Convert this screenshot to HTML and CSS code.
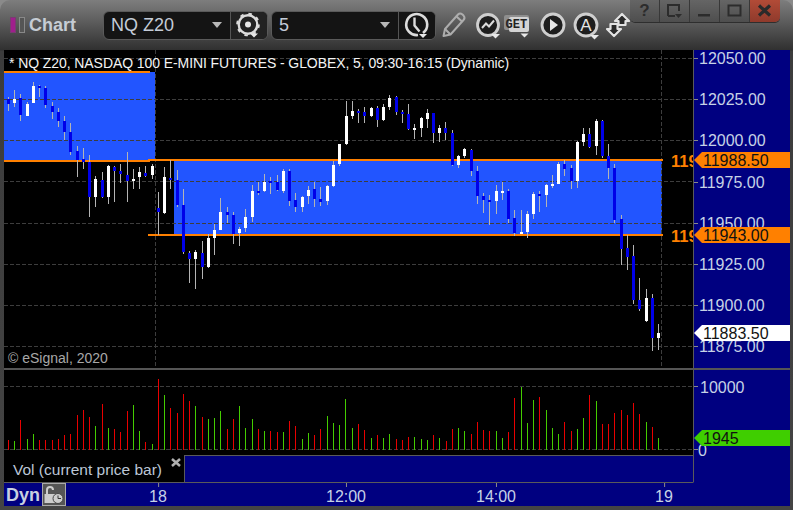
FILE: index.html
```html
<!DOCTYPE html>
<html lang="en">
<head>
<meta charset="utf-8">
<title>Chart</title>
<link rel="stylesheet" href="styles.css">
</head>
<body>
<div class="window">
  <header class="toolbar">
    <span class="pip pip-on"></span>
    <span class="pip pip-off"></span>
    <span class="title">Chart</span>

    <div class="combo combo-symbol">
      <span class="combo-text">NQ Z20</span>
      <span class="caret"></span>
      <span class="combo-btn">
        <svg class="icon" viewBox="1 0 28 28" width="28" height="28">
          <circle class="ring" stroke-width="2.400" cx="14" cy="13.500" r="9.300"/>
          <circle class="ring-teeth" cx="14" cy="13.500" r="10.800" stroke-width="2" stroke-dasharray="3.500 5"/>
          <circle class="solid" cx="14" cy="13.500" r="3"/>
          <path class="solid" d="M16 22.500h8l-4 4z"/>
        </svg>
      </span>
    </div>

    <div class="combo combo-period">
      <span class="combo-text">5</span>
      <span class="caret"></span>
      <span class="combo-btn">
        <svg class="icon" viewBox="1 0 28 28" width="28" height="28">
          <path class="ring" stroke-width="2.600" d="M21 22a10.500 10.500 0 1 0-5 2"/>
          <path class="ring" stroke-width="2.400" d="M12.500 6.500v8l5 6"/>
          <path class="solid" d="M17 23h8l-4 4z"/>
        </svg>
      </span>
    </div>

    <svg class="tool tool-pencil" viewBox="0 0 26 28" width="26" height="28">
      <path class="pencil" d="M2.500 25l1.500-7L17 3.500q2-2 4.500 0l1 1q2 2.500 0 4.500L9.500 23.500z"/>
      <path class="pencil" d="M15.500 5.500l5.500 5M4 18l5.500 5.500"/>
    </svg>
    <svg class="tool tool-trend" viewBox="0 0 28 28" width="28" height="28">
      <circle class="disc" cx="13" cy="13" r="10.500"/>
      <path class="ring" stroke-width="2" d="M7 16l4-4.500 3 3 5-6"/>
      <path class="solid" d="M16 22h9l-4.500 4.500z"/>
    </svg>
    <svg class="tool tool-get" viewBox="0 0 30 28" width="30" height="28">
      <rect class="get-back" x="0" y="3" width="25" height="15" rx="2"/>
      <rect class="get-front" x="5" y="5" width="20" height="15" rx="2"/>
      <text class="get-text" x="1.500" y="16">GET</text>
      <path class="solid" d="M16.500 21.500h8l-4 4z"/>
    </svg>
    <svg class="tool tool-play" viewBox="0 0 26 28" width="26" height="28">
      <circle class="disc" cx="13" cy="13" r="11"/>
      <path class="solid" d="M10 7l8 6-8 6z"/>
    </svg>
    <svg class="tool tool-auto" viewBox="0 0 30 28" width="30" height="28">
      <circle class="disc" cx="13" cy="13" r="11"/>
      <text class="auto-text" x="13" y="19">A</text>
      <path class="solid" d="M17 23h9l-4.500 4.500z"/>
    </svg>
    <svg class="tool tool-swap" viewBox="0 0 24 28" width="24" height="28">
      <path class="swap" d="M16 2l7 7h-3.500v4h-7V9H9z"/>
      <path class="swap" d="M8 24l-7-7h3.500v-5h7v5H15z"/>
    </svg>

    <div class="win-btns">
      <span class="win-btn">?</span>
      <span class="win-btn">
        <svg viewBox="0 0 18 16" width="18" height="16"><path class="win-icon" d="M2 13V2h11v6M2 13h7"/><path class="win-fill" d="M9 11h7l-3.500 4z"/></svg>
      </span>
      <span class="win-btn">
        <svg viewBox="0 0 18 16" width="18" height="16"><path class="win-fill" d="M2 11h12v2.500H2z"/></svg>
      </span>
      <span class="win-btn">
        <svg viewBox="0 0 18 16" width="18" height="16"><path class="win-icon" d="M2.500 2.500h12v10h-12z"/></svg>
      </span>
      <span class="win-btn win-close">
        <svg viewBox="0 0 18 16" width="18" height="16"><path class="win-x" d="M3 2.500l11 10M14 2.500l-11 10"/></svg>
      </span>
    </div>
  </header>

  <main class="chart">
    <section class="price-pane">
      <svg class="plot" viewBox="4 50 689 318" width="689" height="318">
        <rect class="band" x="4" y="72" width="151" height="89"/>
        <rect class="band" x="174" y="160" width="488" height="75"/>
        <path class="grid" d="M4 58.500H693M4 99.500H693M4 140.500H693M4 181.500H693M4 223.500H693M4 264.500H693M4 305.500H693M4 346.500H693M155.500 50V368M661.500 50V368"/>
        <path class="level" d="M4 72H150M4 161H150M148 160H663M148 235H663"/>

        <g transform="translate(0 70) scale(.33333)">
          <path class="wick" d="M25 82V122M43 60V110M61 72V152M82 96V138M100 37V99M118 45V81M136 48V114M157 96V147M175 114V171M193 138V210M211 159V255M232 228V321M250 234V297M268 255V441M286 318V411M307 306V384M325 285V402M343 288V396M361 282V339M382 246V396M400 297V357M418 291V357M436 288V321M457 282V327M475 366V495M493 291V432M511 270V357M532 300V411M550 357V552M568 543V639M586 540V657M607 513V627M625 492V594M643 462V555M661 384V480M682 411V459M700 426V522M718 471V528"/>
          <path class="body-blue" d="M25 87V102M61 84V134M118 48V53M136 54V105M157 108V126M175 126V153M193 153V186M211 186V246M232 243V270M250 267V276M268 276V381M307 330V381M343 291V303M361 303V312M382 315V333M436 309V318M475 414V426M511 324V330M532 330V405M550 405V546M568 549V567M607 549V591M682 426V435M700 435V492"/>
          <path class="body-white" d="M43 87V99M82 102V138M100 48V99M286 327V381M325 288V381M400 327V333M418 306V321M457 288V315M493 321V429M586 546V567M625 504V591M643 480V504M661 426V480M718 477V489"/>
        </g>

        <g transform="translate(230 85) scale(.33333)">
          <path class="wick" d="M46 372V441M67 300V411M85 291V330M103 267V321M121 276V327M142 270V318M160 252V324M178 252V363M196 324V381M217 333V381M235 303V357M253 291V366M271 306V363M292 300V360M310 228V306M328 177V243M349 48V180M367 48V102M385 72V114M403 66V114M424 66V96M442 63V126M460 57V108M478 30V75M499 33V90M517 75V114M535 57V135M553 117V162M574 96V156M592 72V129M610 84V174M628 120V171M646 111V165M667 135V243M685 210V249M703 189V219"/>
          <path class="body-blue" d="M85 318V324M121 288V294M142 291V315M178 258V348M196 345V366M253 312V342M271 342V351M385 78V84M403 81V93M442 69V105M499 36V81M517 81V87M535 87V132M610 84V144M646 129V144M667 144V240"/>
          <path class="body-white" d="M46 396V429M67 318V396M103 291V318M160 258V318M217 336V366M235 315V333M292 303V348M310 240V303M328 177V237M349 93V177M367 78V93M424 69V93M460 66V105M478 39V66M553 129V135M574 99V129M592 84V102M628 129V144M685 213V240M703 192V213"/>
        </g>

        <g transform="translate(460 100) scale(.33333)">
          <path class="wick" d="M34 147V228M52 198V312M70 279V339M88 285V375M109 255V342M127 246V300M145 267V369M163 330V408M184 330V402M202 333V414M220 276V357M238 273V336M259 252V321M277 225V264M295 186V252M313 180V228M334 195V267M352 123V264M370 84V138M388 84V144M409 57V165M427 60V174M445 132V237M463 192V369M484 345V495M502 405V510M520 435V612M538 534V633M559 567V666M577 582V753M595 672V750"/>
          <path class="body-blue" d="M34 150V213M52 213V288M70 288V300M88 300V306M145 273V357M163 354V399M238 282V288M313 192V207M334 204V243M388 102V141M427 63V168M445 168V204M463 204V360M484 357V447M502 444V471M520 468V600M538 600V627M577 594V714"/>
          <path class="body-white" d="M109 273V303M127 273V279M184 396V402M202 342V396M220 282V342M259 255V285M277 252V258M295 192V252M352 126V243M370 102V126M409 63V138M559 594V663M595 699V714"/>
        </g>
      </svg>
      <p class="study-title">* NQ Z20, NASDAQ 100 E-MINI FUTURES - GLOBEX, 5, 09:30-16:15 (Dynamic)</p>
      <p class="copyright">© eSignal, 2020</p>
      <span class="level-text level-hi">119</span>
      <span class="level-text level-lo">119</span>
    </section>

    <section class="axis price-axis">
      <div class="axis-row">12050.00</div>
      <div class="axis-row">12025.00</div>
      <div class="axis-row">12000.00</div>
      <div class="axis-row">11975.00</div>
      <div class="axis-row">11950.00</div>
      <div class="axis-row">11925.00</div>
      <div class="axis-row">11900.00</div>
      <div class="axis-row">11875.00</div>
    </section>

    <section class="vol-pane">
      <svg class="plot" viewBox="4 370 689 85" width="689" height="85">
        <path class="grid" d="M4 386.500H693M4 449.500H693"/>
        <g transform="translate(0 365) scale(.33333)">
          <path class="vol-red" d="M25 225V255M61 165V255M118 225V255M136 225V255M157 225V255M175 222V255M193 210V255M211 207V255M232 150V255M250 135V255M268 156V255M307 117V255M343 192V255M361 201V255M382 138V255M436 231V255M475 42V255M511 129V255M532 144V255M550 87V255M568 108V255M607 156V255M682 192V255M700 162V255M775 192V255M811 198V255M832 201V255M868 168V255M886 183V255M943 210V255M961 192V255"/>
          <path class="vol-green" d="M43 228V255M82 222V255M100 207V255M286 183V255M325 189V255M400 120V255M418 198V255M457 237V255M493 90V255M586 123V255M625 162V255M643 159V255M661 138V255M718 123V255M736 189V255M757 162V255M793 198V255M850 201V255M907 222V255M925 204V255M982 153V255M1000 174V255M1018 180V255M1038 102V255"/>
        </g>
        <g transform="translate(350 365) scale(.33333)">
          <path class="vol-red" d="M25 177V255M43 195V255M82 210V255M139 222V255M157 225V255M175 216V255M250 210V255M289 228V255M307 192V255M364 207V255M382 171V255M400 195V255M418 198V255M475 201V255M493 99V255M568 96V255M643 171V255M664 198V255M718 90V255M757 177V255M775 177V255M793 144V255M814 135V255M832 150V255M850 114V255M868 147V255M907 186V255"/>
          <path class="vol-green" d="M7 189V255M64 219V255M100 219V255M118 207V255M193 216V255M214 222V255M232 225V255M268 219V255M325 189V255M343 198V255M439 198V255M457 219V255M514 66V255M532 174V255M550 105V255M589 135V255M607 189V255M625 207V255M682 192V255M700 159V255M739 108V255M889 171V255M925 219V255"/>
        </g>
      </svg>
      <div class="legend-row">
        <div class="legend">
          <span class="legend-text">Vol (current price bar)</span>
          <svg class="legend-close" viewBox="0 0 10 9" width="10" height="9"><path d="M1 1l8 7M9 1L1 8"/></svg>
        </div>
        <div class="legend-fill"></div>
      </div>
    </section>

    <section class="axis vol-axis">
      <div class="axis-row vol-row">10000</div>
      <div class="axis-row zero-row">0</div>
    </section>

    <footer class="time-axis">
      <span class="mode">Dyn</span>
      <span class="lock">
        <svg viewBox="0 0 22 20" width="22" height="20">
          <path class="lock-shackle" d="M4 9V5q0-3 3-3t3 3"/>
          <path class="lock-body" d="M1.500 9h11v9h-11z"/>
          <circle class="lock-clock" cx="15" cy="13.500" r="5"/>
          <path class="lock-hand" d="M15 10.500v3h3"/>
        </svg>
      </span>
      <span class="time-label t-18">18</span>
      <span class="time-label t-12">12:00</span>
      <span class="time-label t-14">14:00</span>
      <span class="time-label t-19">19</span>
    </footer>

    <span class="marker marker-orange marker-a">11988.50</span>
    <span class="marker marker-orange marker-b">11943.00</span>
    <span class="marker marker-white">11883.50</span>
    <span class="marker marker-green">1945</span>
  </main>
</div>
</body>
</html>
```

FILE: styles.css
```css
* { box-sizing: border-box; }
html, body { margin: 0; padding: 0; background: #8a8a8a; }
body { width: 793px; height: 510px; overflow: hidden; font-family: "Liberation Sans", Arial, sans-serif; }

.window {
  position: relative;
  width: 793px;
  height: 510px;
  padding: 0 3px 4px 4px;
  background: linear-gradient(#7d7d7d 0, #5c5c5c 22px, #303030 50px, #3c3c3c 51px, #444 100%);
  border-radius: 10px 10px 0 0;
  display: flex;
  flex-direction: column;
}

/* toolbar */
.toolbar { position: relative; height: 50px; display: flex; align-items: center; padding: 0 0 0 6px; }
.pip { width: 6px; height: 16px; }
.pip-on { background: #a01e8c; border: 1px solid #7a3a72; }
.pip-off { background: #555; border: 1px solid #888; margin-left: 3px; }
.title { margin-left: 4px; font-size: 18px; font-weight: 700; color: #c6ccd4; line-height: 20px; }
.combo {
  height: 29px;
  width: 165px;
  border: 1px solid #5a5a5a;
  border-radius: 6px;
  background: #141414;
  display: flex;
  align-items: center;
  color: #c4ccd8;
  font-size: 18px;
}
.combo-symbol { margin-left: 27px; }
.combo-period { margin-left: 3px; }
.combo-text { margin-left: 7px; flex: 1; }
.caret { width: 0; height: 0; border: 5px solid transparent; border-top: 6px solid #b8b8b8; border-bottom: 0; margin-right: 8px; }
.combo-btn { width: 37px; height: 27px; border-left: 1px solid #555; display: flex; align-items: center; justify-content: center; background: #222; border-radius: 0 5px 5px 0; }
.combo-period .combo-btn { background: #141414; }
.icon { display: block; }
.tool { display: block; flex: none; }
.tool-pencil { margin-left: 5px; }
.tool-trend { margin-left: 8px; margin-top: 1px; }
.tool-get { margin-left: 1px; margin-top: 2px; }
.tool-play { margin-left: 6px; margin-top: 2px; }
.tool-auto { margin-left: 7px; margin-top: 2px; }
.tool-swap { margin-left: 3px; margin-top: 1px; }

.ring { fill: none; stroke: #dcdcdc; }
.ring-teeth { fill: none; stroke: #dcdcdc; }
.solid { fill: #e8e8e8; }
.disc { fill: #1e1e1e; stroke: #cfcfcf; stroke-width: 2.800; }
.pencil { fill: none; stroke: #adadad; stroke-width: 2; stroke-linejoin: round; }
.get-back { fill: #8e8e8e; }
.get-front { fill: #d4d4d4; }
.get-text { font-family: "Liberation Mono", monospace; font-size: 12px; font-weight: 700; fill: #222; }
.auto-text { font-family: "Liberation Sans", sans-serif; font-size: 17px; fill: #e4e4e4; text-anchor: middle; }
.swap { fill: #2a2a2a; stroke: #e4e4e4; stroke-width: 2.200; stroke-linejoin: round; }

.win-btns {
  position: absolute;
  top: 0;
  right: 10px;
  display: flex;
  height: 22px;
  border-radius: 0 0 5px 5px;
  overflow: hidden;
  box-shadow: 0 1px 0 #2e2e2e;
}
.win-btn {
  width: 30px;
  display: flex;
  align-items: center;
  justify-content: center;
  background: linear-gradient(#656565, #4e4e4e);
  border-right: 1px solid #383838;
  font-size: 17px;
  font-weight: 700;
  color: #2c2c2c;
}
.win-close { background: linear-gradient(#b24b37, #8f3a2c); border-right: 0; }
.win-icon { fill: none; stroke: #2c2c2c; stroke-width: 2; }
.win-fill { fill: #2c2c2c; }
.win-x { fill: none; stroke: #2a2a2a; stroke-width: 3.200; }

/* chart grid */
.chart {
  flex: 1;
  display: grid;
  grid-template-columns: 689px 97px;
  grid-template-rows: 320px 113px 23px;
  position: relative;
}
.price-pane { position: relative; background: #000; border-bottom: 2px solid #555; overflow: hidden; }
.plot { display: block; }
.band { fill: #2255ff; }
.grid { fill: none; stroke: #3d3d3d; stroke-width: 1; stroke-dasharray: 4 2; shape-rendering: crispEdges; }
.level { fill: none; stroke: #ff8000; stroke-width: 2; shape-rendering: crispEdges; }
.wick { fill: none; stroke: #b4b4b4; stroke-width: 3; shape-rendering: crispEdges; }
.body-blue { fill: none; stroke: #0000e8; stroke-width: 9; shape-rendering: crispEdges; }
.body-white { fill: none; stroke: #fff; stroke-width: 9; shape-rendering: crispEdges; }
.vol-red { fill: none; stroke: #e80000; stroke-width: 3; shape-rendering: crispEdges; }
.vol-green { fill: none; stroke: #44cc00; stroke-width: 3; shape-rendering: crispEdges; }

.study-title { position: absolute; left: 5px; top: 5px; margin: 0; font-size: 14px; letter-spacing: -.08px; line-height: 16px; color: #f4f4f4; white-space: nowrap; }
.copyright { position: absolute; left: 4px; top: 300px; margin: 0; font-size: 14px; line-height: 16px; color: #a8a8a8; white-space: nowrap; }
.level-text { position: absolute; left: 667px; font-size: 16.500px; font-weight: 700; line-height: 18px; color: #ff8000; }
.level-hi { top: 102px; }
.level-lo { top: 177px; }

/* axes */
.axis { background: #000080; color: #c6d2e6; font-size: 16px; line-height: 16px; overflow: hidden; border-left: 1px solid #5a5a5a; }
.price-axis { border-bottom: 2px solid #555; }
.axis-row { position: relative; height: 41.200px; padding: 1px 0 0 5px; }
.axis-row::before { content: ""; position: absolute; left: 0; top: 8px; width: 4px; height: 1px; background: #8a8a8a; }
.vol-axis { padding-top: 9px; border-bottom: 1px solid #000080; }
.vol-row { height: 63px; padding-left: 6px; }
.vol-row::before, .zero-row::before { top: 7px; }
.zero-row { padding-left: 4px; }

/* volume pane */
.vol-pane { background: #000; display: flex; flex-direction: column; }
.legend-row { height: 28px; display: flex; border-bottom: 1px solid #5a5a5a; }
.legend { position: relative; width: 180px; background: #000; color: #bcc6d6; font-size: 15.500px; line-height: 28px; padding: 1px 0 0 9px; white-space: nowrap; }
.legend-close { position: absolute; left: 167px; top: 3px; fill: none; stroke: #b0b0b0; stroke-width: 2.500; }
.legend-fill { flex: 1; background: #000080; border-top: 1px solid #5a5a5a; border-left: 1px solid #5a5a5a; }

/* time axis */
.time-axis {
  grid-column: 1 / span 2;
  position: relative;
  background: #000080;
  display: flex;
  align-items: center;
  padding-left: 2px;
}
.mode { font-size: 18px; font-weight: 700; color: #c8d0e0; line-height: 22px; }
.lock { width: 24px; height: 23px; margin-left: 2px; background: #555; border: 1px solid #aaa; display: flex; align-items: center; justify-content: center; }
.lock-shackle { fill: none; stroke: #ccc; stroke-width: 2; }
.lock-body { fill: #ccc; }
.lock-clock { fill: #ccc; stroke: #444; stroke-width: 1; }
.lock-hand { fill: none; stroke: #333; stroke-width: 1; }
.time-label { position: absolute; top: 5px; transform: translateX(-50%); font-size: 16px; line-height: 18px; color: #c6d2e6; }
.time-label::before { content: ""; position: absolute; left: 50%; top: -5px; width: 1px; height: 4px; background: #8a8a8a; }
.t-18 { left: 154px; }
.t-12 { left: 342px; }
.t-14 { left: 492px; }
.t-19 { left: 660px; }

/* price flags, over the axis */
.marker {
  position: absolute;
  left: 690px;
  width: 96px;
  height: 16px;
  padding: 1px 0 0 9px;
  font-size: 16px;
  line-height: 16px;
  color: #111;
  clip-path: polygon(0 50%, 8px 0, 100% 0, 100% 100%, 8px 100%);
}
.marker-orange { background: #ff8000; }
.marker-a { top: 102px; }
.marker-b { top: 177px; }
.marker-white { top: 275px; background: #fff; }
.marker-green { top: 380px; background: #3fce00; }
```
